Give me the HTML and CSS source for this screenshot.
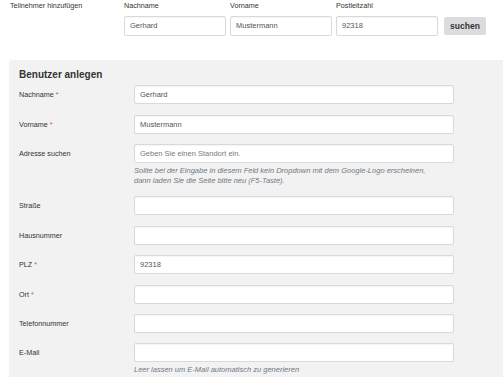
FILE: index.html
```html
<!DOCTYPE html>
<html lang="de">
<head>
<meta charset="utf-8">
<title>Benutzer anlegen</title>
<link rel="stylesheet" href="styles.css">
</head>
<body>
<div class="topbar">
  <div class="top-title">Teilnehmer hinzufügen</div>
  <div class="top-field">
    <label class="top-label">Nachname</label>
    <input class="inp" type="text" value="Gerhard">
  </div>
  <div class="top-field">
    <label class="top-label">Vorname</label>
    <input class="inp" type="text" value="Mustermann">
  </div>
  <div class="top-field">
    <label class="top-label">Postleitzahl</label>
    <input class="inp" type="text" value="92318">
  </div>
  <button class="btn" type="button">suchen</button>
</div>

<div class="panel">
  <h2 class="panel-title">Benutzer anlegen</h2>
  <div class="form">
    <label class="lbl">Nachname <span class="req">*</span></label>
    <div class="ctl"><input class="inp" type="text" value="Gerhard"></div>

    <label class="lbl">Vorname <span class="req">*</span></label>
    <div class="ctl"><input class="inp" type="text" value="Mustermann"></div>

    <label class="lbl">Adresse suchen</label>
    <div class="ctl">
      <input class="inp" type="text" placeholder="Geben Sie einen Standort ein.">
      <p class="help">Sollte bei der Eingabe in diesem Feld kein Dropdown mit dem Google-Logo erscheinen,<br>dann laden Sie die Seite bitte neu (F5-Taste).</p>
    </div>

    <label class="lbl">Straße</label>
    <div class="ctl"><input class="inp" type="text"></div>

    <label class="lbl">Hausnummer</label>
    <div class="ctl"><input class="inp" type="text"></div>

    <label class="lbl">PLZ <span class="req">*</span></label>
    <div class="ctl"><input class="inp" type="text" value="92318"></div>

    <label class="lbl">Ort <span class="req">*</span></label>
    <div class="ctl"><input class="inp" type="text"></div>

    <label class="lbl">Telefonnummer</label>
    <div class="ctl"><input class="inp" type="text"></div>

    <label class="lbl">E-Mail</label>
    <div class="ctl">
      <input class="inp" type="text">
      <p class="help">Leer lassen um E-Mail automatisch zu generieren</p>
    </div>
  </div>
</div>
</body>
</html>
```

FILE: styles.css
```css
* { box-sizing: border-box; }

html, body {
  margin: 0;
  padding: 0;
  background: #ffffff;
  font-family: "Liberation Sans", Arial, sans-serif;
  color: #333333;
  overflow: hidden;
}

.topbar {
  display: flex;
  align-items: flex-start;
  padding: 1px 0 0 10px;
  height: 60px;
}

.top-title {
  width: 114px;
  font-size: 7.2px;
  line-height: 10px;
}

.top-field {
  display: flex;
  flex-direction: column;
  width: 102px;
  margin-right: 4px;
}

.top-label {
  font-size: 7.2px;
  line-height: 10px;
  margin-bottom: 5.3px;
}

.inp {
  display: block;
  width: 100%;
  height: 19.4px;
  margin: 0;
  padding: 0 5px;
  border: 1px solid #d9d9d9;
  border-radius: 2px;
  background: #ffffff;
  font-family: "Liberation Sans", Arial, sans-serif;
  font-size: 7.5px;
  color: #555555;
  box-shadow: inset 0 1px 1px rgba(0,0,0,0.04);
  outline: none;
}

.inp::placeholder {
  color: #7a7a7a;
}

.btn {
  margin: 16px 0 0 2px;
  width: 42px;
  height: 18px;
  padding: 0;
  border: 0;
  border-radius: 2px;
  background: #dcdcdf;
  color: #333333;
  font-family: "Liberation Sans", Arial, sans-serif;
  font-size: 8.5px;
  font-weight: bold;
}

.panel {
  margin-left: 9px;
  background: #f2f2f2;
  border-top-left-radius: 3px;
  padding: 8.8px 0 20px 10px;
  min-height: 330px;
}

.panel-title {
  margin: 0 0 4.5px 0;
  font-size: 10px;
  line-height: 12px;
  font-weight: bold;
  color: #333333;
}

.form {
  display: grid;
  grid-template-columns: 115px 320px;
  row-gap: 10.4px;
  align-items: start;
}

.lbl {
  font-size: 7.2px;
  line-height: 19px;
  color: #333333;
}

.req {
  color: #d9534f;
}

.ctl .inp {
  height: 19px;
}

.help {
  margin: 3px 0 0 0;
  font-size: 7.5px;
  line-height: 10px;
  font-style: italic;
  color: #6f7885;
}
```
